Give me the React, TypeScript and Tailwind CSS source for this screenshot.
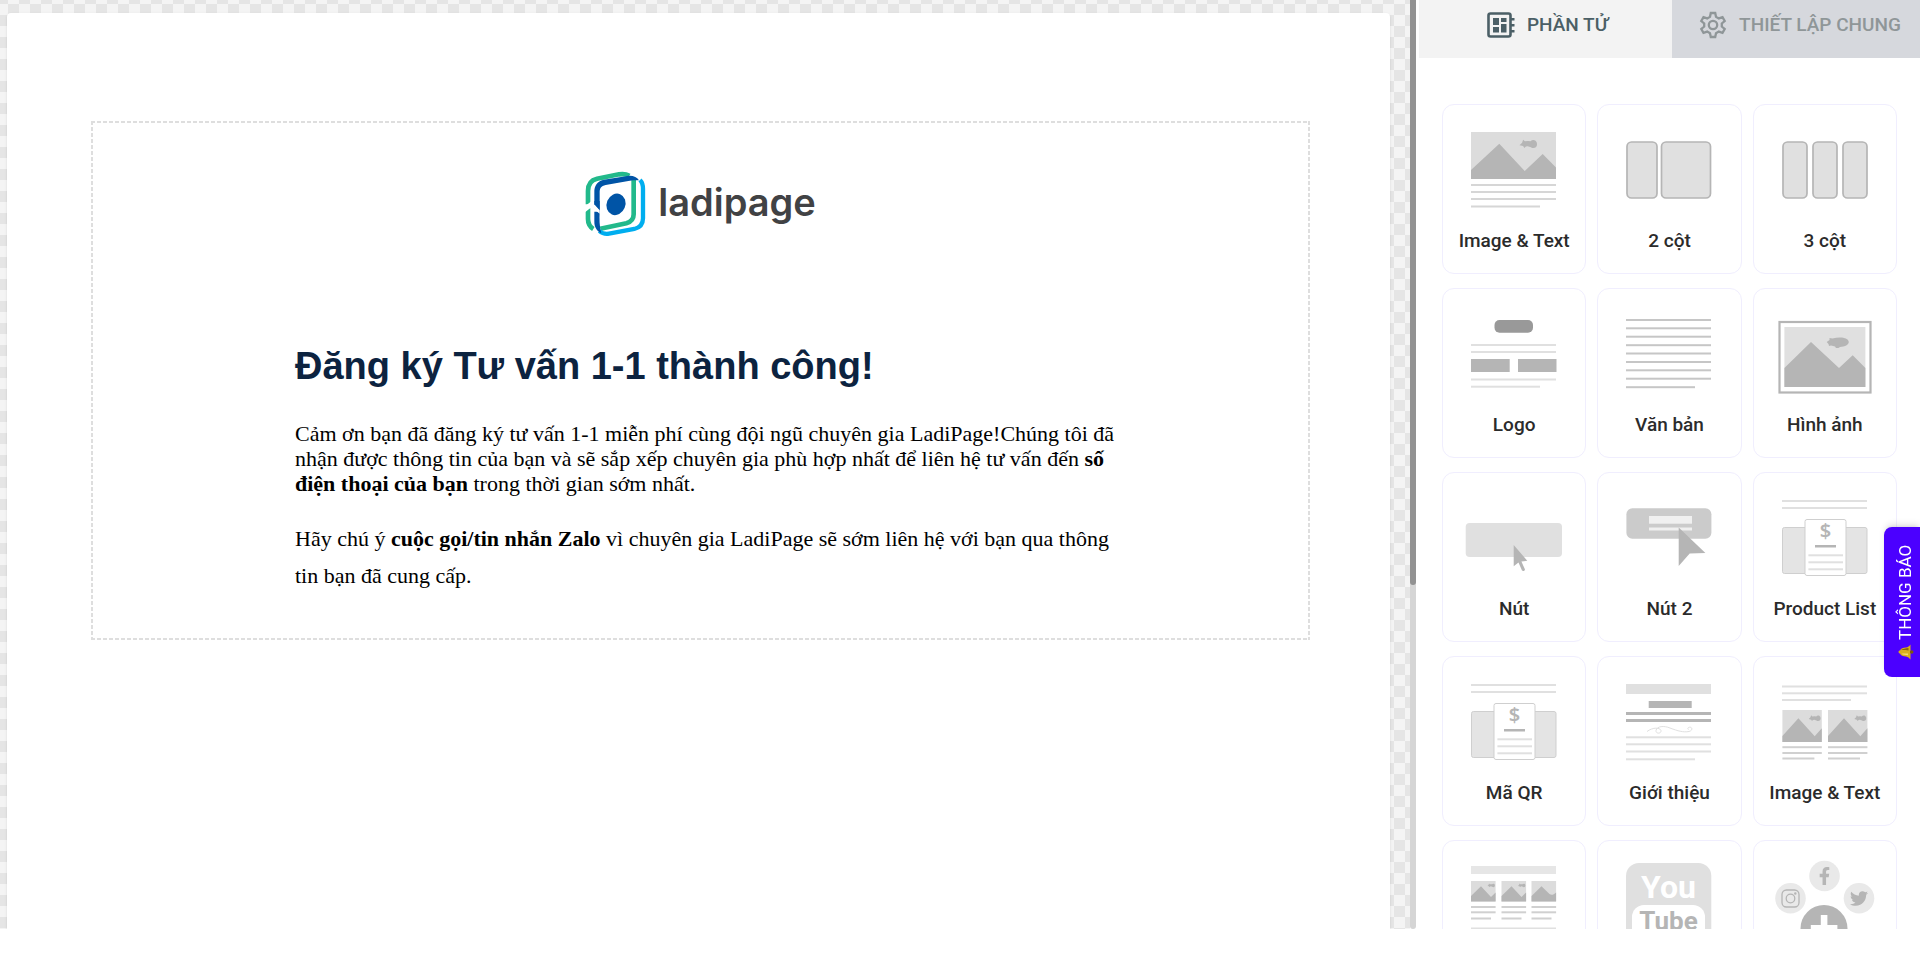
import { ReactNode } from "react";
import { FaFacebookF, FaTwitter } from "react-icons/fa";
import clsx from "clsx";

const LIGHT = "#e0e0e0";
const MID = "#cfcfcf";
const DARK = "#b5b5b5";

type LinesProps = {
  ys: number[];
  x?: number;
  width?: number;
  lastWidth?: number;
  height?: number;
  fill?: string;
};

function Lines({
  ys,
  x = 29,
  width = 85,
  lastWidth = width,
  height = 2,
  fill = LIGHT,
}: LinesProps) {
  return (
    <g fill={fill}>
      {ys.map((y, i) => (
        <rect
          key={y}
          x={x}
          y={y}
          width={i === ys.length - 1 ? lastWidth : width}
          height={height}
        />
      ))}
    </g>
  );
}

function Blimp({ x, y, scale = 1 }: { x: number; y: number; scale?: number }) {
  return (
    <path
      transform={`translate(${x} ${y}) scale(${scale})`}
      fill={DARK}
      d="M0 5.6 2.6 3 3.6 0 5.4 1.6 8.6 1.4 11 1.6C12.4.2 14.6 0 16 1c1.800 1.300 2 4.600.6 6.300-1.300 1.500-3.800 1.400-5.200.2L8.200 6.600 6.400 6.800 4.800 8.400 3.600 6.400Z"
    />
  );
}

function ImageTextIcon() {
  return (
    <>
      <rect x="29" y="28" width="85" height="47" fill="#dcdcdc" />
      <path d="M29 66 57.300 39.700 82.700 67 100.700 50 114 63.500V75H29Z" fill={DARK} />
      <Blimp x={77.5} y={35.7} />
      <Lines ys={[80, 87, 94, 101.5]} lastWidth={69} fill="#d6d6d6" />
    </>
  );
}

function ColumnsIcon({ columns }: { columns: [number, number][] }) {
  return (
    <g fill={LIGHT} stroke={DARK} strokeWidth="1.7">
      {columns.map(([x, width]) => (
        <rect key={x} x={x} y="38" width={width} height="56" rx="4.500" />
      ))}
    </g>
  );
}

function LogoIcon() {
  return (
    <>
      <rect x="52.500" y="32" width="38.500" height="12.700" rx="5" fill="#999" />
      <Lines ys={[56, 63]} />
      <rect x="29" y="71" width="38.700" height="13" fill={DARK} />
      <rect x="76" y="71" width="38.500" height="13" fill={DARK} />
      <Lines ys={[90.5, 97.7]} lastWidth={69} />
    </>
  );
}

function ParagraphIcon() {
  return (
    <Lines
      ys={[31, 39.3, 47.7, 56.2, 64.5, 73, 81.3, 89.7, 98.2]}
      lastWidth={69}
      fill="#c6c6c6"
    />
  );
}

function PictureIcon() {
  return (
    <>
      <rect x="26.500" y="34" width="91" height="70.500" fill="#fff" stroke={DARK} strokeWidth="2.200" />
      <rect x="31.400" y="39" width="81" height="60" fill={LIGHT} />
      <path d="M31.400 80 58 54 86 80 99.700 67.300 112.400 80V99H31.400Z" fill={DARK} />
      <path
        d="M73.700 54 76.500 52V50L79.500 50.600C85 49 91 49 94.500 51.500 96.500 53.500 96 55.500 94 57 91.500 58.500 89 58.800 87 59L85.500 60H83L82 58.500 78 57.500 76 58 75.500 56Z"
        fill={DARK}
      />
    </>
  );
}

function ButtonIcon() {
  return (
    <>
      <rect x="23.700" y="51" width="96.300" height="34" rx="4" fill={LIGHT} />
      <path d="M71.700 73 85.300 88.700 79.400 89.500 83 97.500C82.600 99 81 99.500 80 98.600L76.500 90.500 71.700 94.300Z" fill={DARK} />
    </>
  );
}

function ButtonTwoIcon() {
  return (
    <>
      <rect x="29.400" y="36.300" width="85" height="30.400" rx="6" fill="#cbcbcb" />
      <rect x="52" y="44" width="43" height="7.700" fill="#f0f0f0" />
      <rect x="52" y="55.500" width="43" height="3" fill="#f0f0f0" />
      <path d="M81.700 55.500 108.400 81 92.700 81.500 81.700 94Z" fill={DARK} />
    </>
  );
}

function PriceListIcon() {
  return (
    <>
      <Lines ys={[28, 35]} />
      <rect x="29.500" y="55.500" width="84.500" height="46" rx="2" fill="#e4e4e4" stroke={MID} />
      <rect x="52" y="47.500" width="41" height="56" rx="2" fill="#fff" stroke={MID} />
      <text
        x="72.500"
        y="66"
        textAnchor="middle"
        fill={DARK}
        className="font-['Noto_Sans',sans-serif] text-[20px] font-semibold"
      >
        $
      </text>
      <Lines ys={[73]} x={62} width={21} height={2.5} fill={DARK} />
      <Lines ys={[82.3, 89.3, 96.3]} x={55.4} width={34.6} />
    </>
  );
}

function IntroIcon() {
  return (
    <>
      <rect x="29" y="28" width="85" height="10" fill={LIGHT} />
      <rect x="51.700" y="45" width="43" height="7" fill={DARK} />
      <Lines ys={[56, 63]} height={3} fill={DARK} />
      <path
        d="M50 75.500C56 71 63 71.500 64 74.500 64.500 78 58.500 78 59 74.500 60 70 67 69.500 73 72 81 75 86 76.500 92 75.500 96 74.500 95.500 71 92.500 71.200 90.500 71.500 90.500 73 91.500 73.600"
        fill="none"
        stroke={LIGHT}
      />
      <Lines ys={[80.3, 87.3, 94.5, 102.3]} lastWidth={69} />
    </>
  );
}

function TwoImagesIcon() {
  return (
    <>
      <Lines ys={[29.5, 36.3, 43]} lastWidth={69} />
      {[29.4, 75].map((x) => (
        <g key={x} transform={`translate(${x} 54)`}>
          <rect width="39.400" height="32" fill="#dcdcdc" />
          <path d="M0 26 16 8.300 32.300 26.300 39.400 18.300V32H0Z" fill={DARK} />
          <Blimp x={26.3} y={5.3} scale={0.68} />
          <Lines ys={[36.2, 42, 47.5]} x={0} width={39.4} lastWidth={32} fill="#d0d0d0" />
        </g>
      ))}
    </>
  );
}

function ThreeImagesIcon() {
  return (
    <>
      <rect x="29" y="26" width="85" height="8" fill="#e6e6e6" />
      {[29, 59.5, 89.5].map((x, i) => (
        <g key={x} transform={`translate(${x} 41)`}>
          <rect width="24.600" height="20.500" fill="#dcdcdc" />
          {i < 2 ? (
            <>
              <path d="M0 15 10 5.300 20 16 24.600 11.500V20.500H0Z" fill={DARK} />
              <Blimp x={16.5} y={2.6} scale={0.42} />
            </>
          ) : (
            <path d="M0 15 10 5.300 18 13C20 14.500 22 13.800 24.600 11.500V20.500H0Z" fill={DARK} />
          )}
          <Lines ys={[25, 30.3, 36.5]} x={0} width={24.6} lastWidth={20} fill="#d0d0d0" />
        </g>
      ))}
      <Lines ys={[87.5]} />
    </>
  );
}

function YoutubeIcon() {
  return (
    <>
      <rect x="29" y="23" width="85.300" height="100" rx="13" fill={LIGHT} />
      <rect x="35" y="65" width="73" height="60" rx="12" fill="#fff" />
      <g textAnchor="middle" className="font-['Roboto',sans-serif] font-bold">
        <text x="71.500" y="58" fill="#fff" className="text-[32px]">
          You
        </text>
        <text x="71.500" y="90" fill={DARK} className="text-[26px]">
          Tube
        </text>
      </g>
    </>
  );
}

function SocialIcon() {
  return (
    <>
      <g fill="#e9e9e9">
        <circle cx="71.500" cy="36" r="15.300" />
        <circle cx="37.500" cy="58.300" r="15.300" />
        <circle cx="106" cy="58.300" r="15.300" />
      </g>
      <FaFacebookF x="62.500" y="27" size={18} color={DARK} />
      <FaTwitter x="97" y="49.500" size={18} color={DARK} />
      <g fill="none" stroke={DARK} strokeWidth="1.300">
        <rect x="29" y="50" width="17" height="17" rx="4.500" />
        <circle cx="37.500" cy="58.500" r="4.300" />
        <circle cx="42.300" cy="53.500" r="0.600" />
      </g>
      <circle cx="71" cy="88.500" r="23.500" fill={DARK} />
      <path d="M67.800 75H74.400V85H84.400V92H74.400V102H67.800V92H57.800V85H67.800Z" fill="#fff" />
    </>
  );
}

const elements: { label: string; icon: ReactNode }[] = [
  { label: "Image & Text", icon: <ImageTextIcon /> },
  { label: "2 cột", icon: <ColumnsIcon columns={[[30, 30], [64.5, 49]]} /> },
  {
    label: "3 cột",
    icon: <ColumnsIcon columns={[[30, 24], [60, 24], [90, 24]]} />,
  },
  { label: "Logo", icon: <LogoIcon /> },
  { label: "Văn bản", icon: <ParagraphIcon /> },
  { label: "Hình ảnh", icon: <PictureIcon /> },
  { label: "Nút", icon: <ButtonIcon /> },
  { label: "Nút 2", icon: <ButtonTwoIcon /> },
  { label: "Product List", icon: <PriceListIcon /> },
  { label: "Mã QR", icon: <PriceListIcon /> },
  { label: "Giới thiệu", icon: <IntroIcon /> },
  { label: "Image & Text", icon: <TwoImagesIcon /> },
  { label: "", icon: <ThreeImagesIcon /> },
  { label: "", icon: <YoutubeIcon /> },
  { label: "", icon: <SocialIcon /> },
];

function ElementCard({ label, icon }: { label: string; icon: ReactNode }) {
  return (
    <button
      type="button"
      className="flex h-[170px] flex-col items-center rounded-xl border border-[#f0eefe] bg-white"
    >
      <svg viewBox="1 1 142 118" className="h-[118px] w-[142px]" aria-hidden="true">
        {icon}
      </svg>
      <span className="mt-1 text-[19px] leading-7 font-medium whitespace-nowrap text-[#2b2b2b]">
        {label}
      </span>
    </button>
  );
}

function LadipageMark() {
  return (
    <svg viewBox="78 60 183 198" className="mt-1 h-[66px] w-[61px]" fill="none" aria-hidden="true">
      <g stroke="#22b98b" strokeWidth="14">
        <path d="M87 160V120C87 98 96 87 114 83L180 70C194 68 202 69 211 74" />
        <path d="M87 172V204C87 219 92 227 103 234" />
        <path d="M224 82V190C224 206 216 213 202 217L124 233" />
      </g>
      <path
        d="M243 87C250 94 252 102 252 114V202C252 220 243 230 226 234L150 248C138 250 130 248 121 240"
        stroke="#00aeef"
        strokeWidth="13"
      />
      <path
        d="M106 182H122C121 205 121 224 127 247 113 239 106 228 106 212ZM106 172V124C106 104 114 91 134 86L205 75C222 73 233 78 240 88L222 88 208 90 140 102C126 105 122 112 122 124V184Z"
        fill="#0054a6"
      />
      <path d="M78 166 98 150 122 176 122 188 98 168 78 184Z" fill="#fff" />
      <path d="M106 160 122 178V150H106Z" fill="#0054a6" />
      <ellipse cx="171" cy="160" rx="28" ry="33" transform="rotate(22 171 160)" fill="#0054a6" />
    </svg>
  );
}

function EmailBlock() {
  return (
    <div className="bg-[repeating-linear-gradient(90deg,#dedede_0_4px,transparent_4px_6px),repeating-linear-gradient(90deg,#dedede_0_4px,transparent_4px_6px),repeating-linear-gradient(#dedede_0_4px,transparent_4px_6px),repeating-linear-gradient(#dedede_0_4px,transparent_4px_6px)] bg-[length:100%_2px,100%_2px,2px_100%,2px_100%] bg-[position:top,bottom,left,right] bg-no-repeat pt-12 pb-[46px]">
      <div className="flex h-[66px] items-center justify-center gap-3">
        <LadipageMark />
        <span className="font-['Inter',sans-serif] text-[38px] leading-[56px] font-semibold text-[#414244]">
          ladipage
        </span>
      </div>
      <div className="mx-auto mt-[104px] max-w-[811px] font-['Liberation_Serif',serif] text-[22px] leading-[25px] whitespace-nowrap text-black">
        <h1 className="font-['Liberation_Sans',sans-serif] text-[38px] leading-[54px] font-bold text-[#0c2340]">
          Đăng ký Tư vấn 1-1 thành công!
        </h1>
        <p className="mt-7">
          Cảm ơn bạn đã đăng ký tư vấn 1-1 miễn phí cùng đội ngũ chuyên gia
          LadiPage!Chúng tôi đã
          <br />
          nhận được thông tin của bạn và sẽ sắp xếp chuyên gia phù hợp nhất để
          liên hệ tư vấn đến <strong>số</strong>
          <br />
          <strong>điện thoại của bạn</strong> trong thời gian sớm nhất.
        </p>
        <p className="mt-6 leading-[37px]">
          Hãy chú ý <strong>cuộc gọi/tin nhắn Zalo</strong> vì chuyên gia
          LadiPage sẽ sớm liên hệ với bạn qua thông
          <br />
          tin bạn đã cung cấp.
        </p>
      </div>
    </div>
  );
}

function PanelTab({
  active,
  icon,
  children,
}: {
  active?: boolean;
  icon: ReactNode;
  children: ReactNode;
}) {
  return (
    <button
      type="button"
      role="tab"
      aria-selected={!!active}
      className={clsx(
        "flex h-[58px] items-center justify-center gap-3 pb-2 pl-1 text-[19px] font-medium whitespace-nowrap",
        active
          ? "flex-1 bg-[#f3f3f3] text-[#4b5f66]"
          : "w-[248px] bg-[#d6d8dd] pl-2 text-[#8f9698]"
      )}
    >
      {icon}
      {children}
    </button>
  );
}

function BlocksIcon() {
  return (
    <svg viewBox="0 0 28 26" className="h-[26px] w-7" aria-hidden="true">
      <rect x="1.500" y="1.500" width="22" height="23" rx="2" fill="none" stroke="currentColor" strokeWidth="2.600" />
      <path
        d="M6 6H12V13H6ZM14 6H19.500V10H14ZM6 15H12V20.500H6ZM14 12H19.500V20.500H14ZM24 6H27.500V8.500H24ZM24 12H27.500V14.500H24ZM24 18H27.500V20.500H24Z"
        fill="currentColor"
      />
    </svg>
  );
}

function GearIcon() {
  return (
    <svg
      viewBox="0 0 28 28"
      className="size-7"
      fill="none"
      stroke="currentColor"
      strokeWidth="2.300"
      aria-hidden="true"
    >
      <path d="M11.800 2H16.200L17 5.800 19.800 7.400 23.500 6.200 25.700 10 22.800 12.500V15.500L25.700 18 23.500 21.800 19.800 20.600 17 22.200 16.200 26H11.800L11 22.200 8.200 20.600 4.500 21.800 2.300 18 5.200 15.500V12.500L2.300 10 4.500 6.200 8.200 7.400 11 5.800Z" />
      <circle cx="14" cy="14" r="4.200" />
    </svg>
  );
}

function BellIcon() {
  return (
    <svg viewBox="0 0 16 16" className="size-4" aria-hidden="true">
      <path d="M8 .5C9 .5 9.600 1.200 9.600 2 12 3 12.400 5 12.600 8 12.800 10 14 11 15.500 12.500H.5C2 11 3.200 10 3.400 8 3.600 5 4 3 6.400 2 6.400 1.200 7 .5 8 .5Z" fill="#d9ae1e" />
      <path d="M10 3C11.500 4.500 11.400 8 12 10.500H9.500C10 8 10.300 5 10 3Z" fill="#8a6508" />
      <path d="M6.200 3.500C5.200 5 5.200 8 4.800 10H6.600C6.600 8 6.600 5 6.200 3.500Z" fill="#f6dc6a" />
      <circle cx="8" cy="13.700" r="1.800" fill="#7d5a0a" />
    </svg>
  );
}

export default function App() {
  return (
    <div className="flex h-[calc(100vh-30px)] overflow-hidden bg-white font-['Roboto',sans-serif]">
      <main className="min-w-0 flex-1 bg-[repeating-conic-gradient(#e5e5e5_0_25%,#f4f4f4_0_50%)] bg-[length:22px_22px] bg-[position:8px_-7px] pt-[13px] pr-5 pl-[7px]">
        <div className="h-full rounded-t bg-white pt-[108px] pr-20 pl-[84px] shadow-sm">
          <EmailBlock />
        </div>
      </main>

      <div className="mr-[3px] w-1.5 shrink-0 rounded-b bg-[#d5d5d5]">
        <div className="h-[63%] rounded-b bg-[#929292]" />
      </div>

      <aside className="w-[501px] shrink-0">
        <div role="tablist" className="flex">
          <PanelTab active icon={<BlocksIcon />}>
            PHẦN TỬ
          </PanelTab>
          <PanelTab icon={<GearIcon />}>THIẾT LẬP CHUNG</PanelTab>
        </div>
        <div className="mt-[46px] grid grid-cols-3 gap-x-[11px] gap-y-3.5 px-[23px]">
          {elements.map((element, i) => (
            <ElementCard key={i} label={element.label} icon={element.icon} />
          ))}
        </div>
      </aside>

      <button
        type="button"
        className="fixed top-[55%] right-0 flex h-[150px] w-9 rotate-180 items-center justify-center gap-1 rounded-r-lg bg-[#4b00ff] pr-2 text-[17px] text-white shadow-md [writing-mode:vertical-rl]"
      >
        <span className="rotate-90">
          <BellIcon />
        </span>
        THÔNG BÁO
      </button>
    </div>
  );
}
